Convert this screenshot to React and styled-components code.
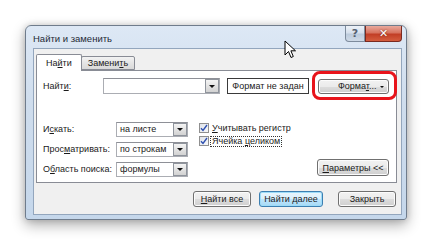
import React from "react";
import styled, { createGlobalStyle } from "styled-components";

const Global = createGlobalStyle`
  html, body { margin: 0; padding: 0; background: #ffffff; }
  body { font-family: "Liberation Sans", Arial, sans-serif; font-size: 9px; color: #1a1a1a; }
  * { box-sizing: border-box; }
`;

const Page = styled.div`
  width: 434px;
  height: 246px;
  padding: 25px 0 0 25px;
  position: relative;
  overflow: hidden;
`;

const Window = styled.div`
  width: 382px;
  height: 195px;
  border: 1px solid #6f7c8c;
  border-radius: 6px 6px 3px 3px;
  background: linear-gradient(180deg, #dde8f5 0%, #cfdded 40%, #c5d7eb 100%);
  box-shadow: 0 5px 14px rgba(0, 0, 0, 0.32), 0 0 6px rgba(0, 0, 0, 0.15);
  display: flex;
  flex-direction: column;
  padding: 0 4px 4px 7px;
`;

const TitleBar = styled.div`
  height: 22px;
  display: flex;
  align-items: flex-start;
`;

const Title = styled.div`
  flex: 1;
  padding-top: 7px;
  font-size: 9.5px;
  color: #1e2a36;
`;

const CaptionButton = styled.div`
  height: 16px;
  width: ${(p) => p.$w}px;
  display: flex;
  align-items: center;
  justify-content: center;
  border: 1px solid ${(p) => (p.$close ? "#7a2a20" : "#7d8b9c")};
  border-top: none;
  border-radius: ${(p) => (p.$close ? "0 0 4px 0" : "0 0 0 4px")};
  background: ${(p) =>
    p.$close
      ? "linear-gradient(180deg, #e9a99c 0%, #d7735f 45%, #c23e26 55%, #d45d3e 100%)"
      : "linear-gradient(180deg, #edf2f8 0%, #d6e0ec 45%, #bccbdc 55%, #cfdae7 100%)"};
  color: ${(p) => (p.$close ? "#ffffff" : "#556070")};
  font-weight: bold;
  font-size: 11px;
  font-family: "DejaVu Sans", sans-serif;
  text-shadow: ${(p) => (p.$close ? "0 0 2px #6b1a0d" : "none")};
`;

const Client = styled.div`
  flex: 1;
  background: #f0f0f0;
  border: 1px solid #93a6bd;
  display: flex;
  flex-direction: column;
  padding: 5px 4px 7px 2px;
`;

const Tabs = styled.div`
  display: flex;
  align-items: flex-end;
  height: 16px;
  position: relative;
  z-index: 1;
`;

const Tab = styled.div`
  height: ${(p) => (p.$active ? 17 : 14)}px;
  padding: 0 ${(p) => (p.$active ? 9 : 6)}px;
  display: flex;
  align-items: center;
  border: 1px solid #898c95;
  border-bottom: ${(p) => (p.$active ? "none" : "1px solid #898c95")};
  margin-bottom: ${(p) => (p.$active ? -1 : 0)}px;
  margin-left: ${(p) => (p.$active ? 0 : -1)}px;
  border-radius: 2px 2px 0 0;
  background: ${(p) =>
    p.$active ? "#ffffff" : "linear-gradient(180deg, #f3f3f3 0%, #e5e5e5 50%, #d9d9d9 100%)"};
`;

const Panel = styled.div`
  height: 113px;
  background: #ffffff;
  border: 1px solid #898c95;
  padding: 7px 7px 6px 6px;
  display: flex;
  flex-direction: column;
`;

const FindRow = styled.div`
  display: flex;
  align-items: center;
  height: 17px;
`;

const Label = styled.div`
  width: ${(p) => p.$w}px;
  flex-shrink: 0;
  white-space: nowrap;
`;

const Combo = styled.div`
  width: ${(p) => p.$w}px;
  height: ${(p) => p.$h}px;
  border: 1px solid #abadb3;
  border-top-color: #8e9097;
  background: #ffffff;
  display: flex;
  align-items: stretch;
  flex-shrink: 0;
`;

const ComboText = styled.div`
  flex: 1;
  padding-left: 3px;
  display: flex;
  align-items: center;
  white-space: nowrap;
  overflow: hidden;
`;

const DropBtn = styled.div`
  width: 14px;
  border: 1px solid #8f949c;
  background: linear-gradient(180deg, #f4f4f4 0%, #e3e3e3 50%, #d2d2d2 100%);
  display: flex;
  align-items: center;
  justify-content: center;
`;

const Tri = styled.span`
  width: 0;
  height: 0;
  border-left: 3px solid transparent;
  border-right: 3px solid transparent;
  border-top: 3px solid #111;
`;

const FormatStatus = styled.div`
  margin-left: 7px;
  width: 83px;
  height: 16px;
  border: 1px solid #3a3a3a;
  background: #ffffff;
  display: flex;
  align-items: center;
  justify-content: center;
  white-space: nowrap;
`;

const FormatWrap = styled.div`
  margin-left: 9px;
  position: relative;
  display: flex;
`;

const RedRing = styled.div`
  position: absolute;
  left: -6px;
  top: -8px;
  width: 85px;
  height: 29px;
  border: 3px solid #e8141b;
  border-radius: 8px;
  pointer-events: none;
`;

const Button = styled.div`
  width: ${(p) => p.$w}px;
  height: ${(p) => p.$h}px;
  border: 1px solid ${(p) => (p.$default ? "#3c7fb1" : "#707070")};
  border-radius: 3px;
  background: ${(p) =>
    p.$default
      ? "linear-gradient(180deg, #eaf6fd 0%, #d9f0fc 50%, #bee6fd 51%, #a7d9f5 100%)"
      : "linear-gradient(180deg, #f2f2f2 0%, #ebebeb 50%, #dddddd 51%, #cfcfcf 100%)"};
  box-shadow: inset 0 0 0 1px ${(p) => (p.$default ? "#9ddcf8" : "#fcfcfc")};
  display: flex;
  align-items: center;
  justify-content: ${(p) => (p.$split ? "flex-start" : "center")};
  padding: ${(p) => (p.$split ? "0 0 0 19px" : "0")};
  flex-shrink: 0;
  white-space: nowrap;
  position: relative;
`;

const SplitArrow = styled.span`
  position: absolute;
  right: 4px;
  top: 6px;
  width: 0;
  height: 0;
  border-left: 2px solid transparent;
  border-right: 2px solid transparent;
  border-top: 2px solid #111;
`;

const Options = styled.div`
  margin-top: 28px;
  display: flex;
  flex: 1;
`;

const LeftCol = styled.div`
  display: flex;
  flex-direction: column;
  gap: 6px;
`;

const OptRow = styled.div`
  display: flex;
  align-items: center;
  height: 14px;
`;

const CheckCol = styled.div`
  margin-left: 11px;
  padding-top: 1px;
  display: flex;
  flex-direction: column;
  gap: 3px;
`;

const CheckRow = styled.div`
  display: flex;
  align-items: center;
  height: 10px;
  gap: 1px;
`;

const Box = styled.div`
  width: 10px;
  height: 10px;
  border: 1px solid #8f8f8f;
  background: linear-gradient(135deg, #dfe3ea 0%, #f7f8fa 100%);
  display: flex;
  align-items: center;
  justify-content: center;
`;

const CheckLabel = styled.div`
  padding: 0 1px;
  height: 11px;
  line-height: 9px;
  border: 1px ${(p) => (p.$focus ? "dotted #333" : "solid transparent")};
  white-space: nowrap;
`;

const ParamsWrap = styled.div`
  margin-left: auto;
  align-self: flex-end;
`;

const BottomRow = styled.div`
  margin-top: 8px;
  display: flex;
  justify-content: flex-end;
  align-items: center;
  padding-right: 1px;
`;

const Gap = styled.div`
  width: ${(p) => p.$w}px;
  flex-shrink: 0;
`;

const Cursor = styled.svg`
  position: absolute;
  left: 284px;
  top: 40px;
`;

const U = styled.span`
  text-decoration: underline;
`;

function Dropdown({ w, h, children }) {
  return (
    <Combo $w={w} $h={h}>
      <ComboText>{children}</ComboText>
      <DropBtn>
        <Tri />
      </DropBtn>
    </Combo>
  );
}

function Check({ children, focus }) {
  return (
    <CheckRow>
      <Box>
        <svg width="8" height="8" viewBox="0 0 8 8">
          <path d="M1 4.2 L3 6.4 L7 1" fill="none" stroke="#2d4fb0" strokeWidth="1.4" />
        </svg>
      </Box>
      <CheckLabel $focus={focus}>{children}</CheckLabel>
    </CheckRow>
  );
}

export default function App() {
  return (
    <>
      <Global />
      <Page>
        <Window>
          <TitleBar>
            <Title>Найти и заменить</Title>
            <CaptionButton $w={20}>?</CaptionButton>
            <CaptionButton $w={37} $close>✕</CaptionButton>
          </TitleBar>
          <Client>
            <Tabs>
              <Tab $active>
                <span>
                  На<U>й</U>ти
                </span>
              </Tab>
              <Tab>
                <span>
                  Замени<U>т</U>ь
                </span>
              </Tab>
            </Tabs>
            <Panel>
              <FindRow>
                <Label $w={60}>
                  Найт<U>и</U>:
                </Label>
                <Dropdown w={117} h={16} />
                <FormatStatus>Формат не задан</FormatStatus>
                <FormatWrap>
                  <Button $w={71} $h={15} $split>
                    <span>
                      Форма<U>т</U>...
                    </span>
                    <SplitArrow />
                  </Button>
                  <RedRing />
                </FormatWrap>
              </FindRow>
              <Options>
                <LeftCol>
                  <OptRow>
                    <Label $w={73}>
                      И<U>с</U>кать:
                    </Label>
                    <Dropdown w={72} h={15}>на листе</Dropdown>
                  </OptRow>
                  <OptRow>
                    <Label $w={73}>
                      Прос<U>м</U>атривать:
                    </Label>
                    <Dropdown w={72} h={15}>по строкам</Dropdown>
                  </OptRow>
                  <OptRow>
                    <Label $w={73}>
                      О<U>б</U>ласть поиска:
                    </Label>
                    <Dropdown w={72} h={15}>формулы</Dropdown>
                  </OptRow>
                </LeftCol>
                <CheckCol>
                  <Check>
                    <U>У</U>читывать регистр
                  </Check>
                  <Check focus>
                    Ячейка <U>ц</U>еликом
                  </Check>
                </CheckCol>
                <ParamsWrap>
                  <Button $w={72} $h={17}>
                    <span>
                      <U>П</U>араметры &lt;&lt;
                    </span>
                  </Button>
                </ParamsWrap>
              </Options>
            </Panel>
            <BottomRow>
              <Button $w={58} $h={16}>
                <span>
                  <U>Н</U>айти все
                </span>
              </Button>
              <Gap $w={8} />
              <Button $w={64} $h={16} $default>
                <span>
                  Найти <U>д</U>алее
                </span>
              </Button>
              <Gap $w={15} />
              <Button $w={58} $h={16}>
                <span>Закрыть</span>
              </Button>
            </BottomRow>
          </Client>
        </Window>
        <Cursor width="13" height="19" viewBox="0 0 13 19">
          <path
            d="M1 1 L1 15 L4.5 11.5 L7 17.5 L9.3 16.5 L6.9 10.8 L11.5 10.8 Z"
            fill="#ffffff"
            stroke="#000000"
            strokeWidth="1"
            strokeLinejoin="round"
          />
        </Cursor>
      </Page>
    </>
  );
}
